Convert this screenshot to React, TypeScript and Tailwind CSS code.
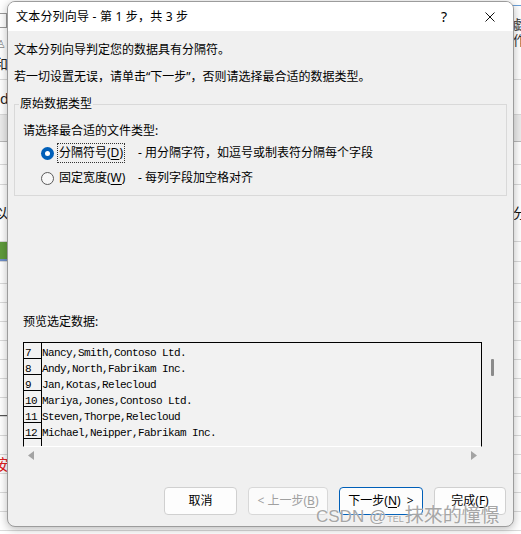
import React from "react";

const previewRows: [string, string][] = [
  ["7", "Nancy,Smith,Contoso Ltd."],
  ["8", "Andy,North,Fabrikam Inc."],
  ["9", "Jan,Kotas,Relecloud"],
  ["10", "Mariya,Jones,Contoso Ltd."],
  ["11", "Steven,Thorpe,Relecloud"],
  ["12", "Michael,Neipper,Fabrikam Inc."],
];

function Radio({ checked }: { checked: boolean }) {
  if (checked) {
    return (
      <span className="w-[13px] h-[13px] rounded-full bg-[#005fb8] flex items-center justify-center shrink-0">
        <span className="w-[5px] h-[5px] rounded-full bg-white" />
      </span>
    );
  }
  return <span className="w-[13px] h-[13px] rounded-full border border-[#5a5a5a] bg-[#f7f7f7] shrink-0" />;
}

function Backdrop() {
  const lower = Array.from({ length: 14 }, (_, i) => i);
  return (
    <div className="flex flex-col w-full h-full overflow-hidden text-[14px] leading-none">
      <div className="h-[80px] shrink-0 border-b border-[#dadada] flex justify-between">
        <div className="flex flex-col w-[8px] overflow-hidden">
          <span className="mt-[13px] w-[7px] h-[15px] border border-[#9a9a9a] border-l-0" />
          <span className="mt-[10px] -ml-[4px] text-[#8a8a8a] text-[11px]">♙</span>
          <span className="mt-[8px] -ml-[6px] text-[#222]">和</span>
        </div>
        <div className="flex flex-col w-[8px] overflow-hidden">
          <span className="mt-[0px] w-[8px] h-[6px] border-b border-[#6aa0d8]" />
          <span className="mt-[12px] text-[#333] text-[13px]">戯</span>
          <span className="mt-[3px] text-[#333] text-[13px]">作</span>
        </div>
      </div>
      <div className="h-[35px] shrink-0 border-b border-[#dadada] flex justify-between items-end pb-[8px]">
        <span className="text-[#222] text-[14px]">d</span>
        <span />
      </div>
      <div className="h-[27px] shrink-0 border-b border-[#b9b9b9] bg-[#ececec]" />
      <div className="h-[23px] shrink-0 border-b border-[#dadada]" />
      <div className="h-[20px] shrink-0 border-b border-[#dadada]" />
      <div className="h-[57px] shrink-0 border-b border-[#dadada] flex justify-between items-center">
        <span className="-ml-[6px] text-[#111] text-[14px]">以</span>
        <span className="flex items-center w-[8px] overflow-hidden">
          <span className="text-[#111] text-[14px] shrink-0">分</span>
        </span>
      </div>
      <div className="h-[20px] shrink-0 border-b border-[#dadada] flex">
        <span className="w-[8px] h-full bg-[#5f9b3c] border-b-2 border-[#6f8fc8]" />
      </div>
      <div className="h-[22px] shrink-0 border-b border-[#dadada]" />
      {lower.map((i) => (
        <div key={i} className="h-[19px] shrink-0 border-b border-[#dadada] flex items-center overflow-hidden">
          {i === 9 ? <span className="-ml-[7px] text-[15px] text-[#e02020]">按</span> : null}
          {i === 6 ? <span className="w-[8px] h-full border-b border-[#555]" /> : null}
        </div>
      ))}
    </div>
  );
}

export default function App() {
  return (
    <div className="relative w-[521px] h-[534px] overflow-hidden bg-white font-['Noto_Sans','Noto_Sans_CJK_SC',sans-serif] text-black">
      <Backdrop />

      <div className="absolute left-[7px] top-[1px] w-[507px] h-[526px] rounded-[8px] border border-[#9c9c9c] bg-[#f0f0f0] shadow-[0_2px_10px_rgba(0,0,0,0.28)] overflow-hidden flex flex-col">
        {/* title bar */}
        <div className="h-[29px] bg-white flex items-center shrink-0">
          <span className="pl-[8px] text-[12px] leading-[16px] flex-1 tracking-[0.2px]">文本分列向导 - 第 1 步，共 3 步</span>
          <span className="w-[46px] h-full flex items-center justify-center text-[14px] leading-none">?</span>
          <span className="w-[46px] h-full flex items-center justify-center">
            <svg width="10" height="10" viewBox="0 0 10 10" fill="none" stroke="#111" strokeWidth="1">
              <path d="M0.5 0.5 L9.5 9.5 M9.5 0.5 L0.5 9.5" />
            </svg>
          </span>
        </div>

        {/* body */}
        <div className="flex flex-col px-[6px] text-[12px] leading-[16px]">
          <p className="mt-[11px]">文本分列向导判定您的数据具有分隔符。</p>
          <p className="mt-[11px]">若一切设置无误，请单击“下一步”，否则请选择最合适的数据类型。</p>

          <fieldset className="mt-[11px] border border-[#d9d9d9] pb-[7px]">
            <legend className="ml-[4px] px-[1px] leading-[16px]">原始数据类型</legend>
            <p className="pl-[8px] mt-[11px]">请选择最合适的文件类型:</p>
            <div className="flex items-center h-[20px] mt-[4px] pl-[26px]">
              <Radio checked />
              <span className="ml-[3px] w-[68px] h-[20px] border border-dotted border-[#333] flex items-center pl-[1px] whitespace-nowrap">
                分隔符号(<span className="underline underline-offset-2">D</span>)
              </span>
              <span className="ml-[13px] whitespace-nowrap">- 用分隔字符，如逗号或制表符分隔每个字段</span>
            </div>
            <div className="flex items-center h-[20px] mt-[5px] pl-[26px]">
              <Radio checked={false} />
              <span className="ml-[3px] w-[68px] h-[20px] flex items-center pl-[2px] whitespace-nowrap">
                固定宽度(<span className="underline underline-offset-2">W</span>)
              </span>
              <span className="ml-[13px] whitespace-nowrap">- 每列字段加空格对齐</span>
            </div>
          </fieldset>

          <p className="mt-[118px] ml-[9px]">预览选定数据:</p>

          <div className="mt-[12px] ml-[9px] w-[476px] flex flex-col">
            <div className="flex">
              <div className="flex-1 h-[105px] border border-black border-b-white bg-[#f2f2f2] overflow-hidden flex flex-col font-['Liberation_Mono',monospace] text-[11px] tracking-[-0.6px]">
                {previewRows.map(([n, t]) => (
                  <div key={n} className="flex h-[16px] shrink-0">
                    <div className="w-[18px] h-[16px] border-r border-b border-black pl-[1px] pt-[2px] leading-[16px] overflow-visible">{n}</div>
                    <div className="pt-[2px] leading-[16px] whitespace-pre">{t}</div>
                  </div>
                ))}
                <div className="flex flex-1">
                  <div className="w-[18px] border-r border-black" />
                </div>
              </div>
              <div className="w-[17px] h-[105px] flex justify-center pl-[3px]">
                <span className="mt-[17px] w-[3px] h-[17px] rounded-[1px] bg-[#8b8b8b]" />
              </div>
            </div>
            <div className="h-[17px] flex items-center justify-between pl-[5px] pr-[22px]">
              <svg width="6" height="9" viewBox="0 0 6 9">
                <path d="M6 0 L0 4.5 L6 9 Z" fill="#a3a3a3" />
              </svg>
              <svg width="6" height="9" viewBox="0 0 6 9">
                <path d="M0 0 L6 4.5 L0 9 Z" fill="#a3a3a3" />
              </svg>
            </div>
          </div>

          <div className="mt-[23px] flex justify-end gap-[11px] pr-[1px]">
            <button className="w-[73px] h-[28px] rounded-[4px] border border-[#d0d0d0] bg-[#fdfdfd] text-[12px] leading-[16px] flex items-center justify-center">
              取消
            </button>
            <button className="w-[80px] h-[28px] rounded-[4px] border border-[#d8d8d8] bg-[#fbfbfb] text-[12px] leading-[16px] text-[#a0a0a0] flex items-center justify-center whitespace-nowrap">
              &lt; 上一步(<span className="underline underline-offset-2">B</span>)
            </button>
            <button className="w-[84px] h-[28px] rounded-[4px] border border-[#005fb8] bg-[#fdfdfd] text-[12px] leading-[16px] flex items-center justify-center whitespace-nowrap">
              下一步(<span className="underline underline-offset-2">N</span>)&nbsp;&nbsp;&gt;
            </button>
            <button className="w-[72px] h-[28px] rounded-[4px] border border-[#d0d0d0] bg-[#fdfdfd] text-[12px] leading-[16px] flex items-center justify-center whitespace-nowrap">
              完成(<span className="underline underline-offset-2">F</span>)
            </button>
          </div>
        </div>
      </div>

      {/* watermark */}
      <div className="absolute left-[316px] top-[502px] flex items-baseline text-[#a6a6a6] leading-[24px] whitespace-nowrap [text-shadow:0_0_2px_rgba(255,255,255,0.9)]">
        <span className="font-['Liberation_Sans',sans-serif] text-[17px]">CSDN @</span>
        <span className="font-['Liberation_Sans',sans-serif] text-[9px] ml-[1px]">TEL</span>
        <span className="font-['Noto_Sans_CJK_SC',sans-serif] text-[19px] ml-[1px]">抹來的憧憬</span>
      </div>
    </div>
  );
}
